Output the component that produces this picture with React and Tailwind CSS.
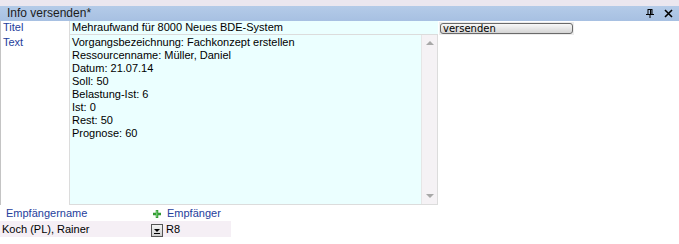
import React from 'react';

const lines = [
  'Vorgangsbezeichnung: Fachkonzept erstellen',
  'Ressourcenname: Müller, Daniel',
  'Datum: 21.07.14',
  'Soll: 50',
  'Belastung-Ist: 6',
  'Ist: 0',
  'Rest: 50',
  'Prognose: 60',
];

const PinIcon = () => (
  <svg width="8" height="9" viewBox="0 0 8 9">
    <rect x="2" y="0.5" width="4" height="5" fill="none" stroke="#000" strokeWidth="1" />
    <rect x="4" y="0.5" width="1.2" height="5" fill="#000" />
    <rect x="0" y="5" width="8" height="1" fill="#000" />
    <rect x="3.5" y="6" width="1" height="3" fill="#000" />
  </svg>
);

const CloseIcon = () => (
  <svg width="9" height="9" viewBox="0 0 9 9">
    <path d="M1 1 L8 8 M8 1 L1 8" stroke="#000" strokeWidth="1.6" />
  </svg>
);

const PlusIcon = () => (
  <svg width="8" height="8" viewBox="0 0 8 8">
    <path d="M3 0 H5 V3 H8 V5 H5 V8 H3 V5 H0 V3 H3 Z" fill="#3aa63a" stroke="#2b8a2b" strokeWidth="0.5" />
    <rect x="3.4" y="0.6" width="0.8" height="6.5" fill="#8fdc8f" />
  </svg>
);

const App = () => {
  return (
    <div className="w-[679px] h-[244px] bg-white overflow-hidden text-[11px] leading-[13px] text-black" style={{ fontFamily: '"Liberation Sans", Arial, sans-serif' }}>
      <div className="h-[6px] bg-[#ebe7ef]" />
      <div className="h-[15px] bg-gradient-to-b from-[#b4cbe8] to-[#a7c0e2] flex items-center justify-between pl-[7px] pr-[6px]">
        <span className="text-[12px] leading-[15px] text-[#1c1c1c]">Info versenden*</span>
        <div className="flex items-center gap-[10px]">
          <PinIcon />
          <CloseIcon />
        </div>
      </div>

      {/* Titel */}
      <div className="flex h-[14px]">
        <div className="w-[69px] border-l border-[#c4c4c4] pl-[2px] text-[#25409c] leading-[13px]">Titel</div>
        <div className="w-[369px] bg-[#ebffff] border-l border-b border-[#dcdcdc] pl-[2px] leading-[13px]">
          Mehraufwand für 8000 Neues BDE-System
        </div>
        <div className="ml-[1px] mt-[1px] h-[13px] bg-[#ececec] p-[1px]">
          <div className="w-[133px] h-[11px] rounded-[3px] border border-[#6a6a6a] bg-gradient-to-b from-[#f8f8f8] to-[#d4d4d4] pl-[2px] text-[10px] leading-[9px]" style={{ fontFamily: '"DejaVu Sans", Verdana, sans-serif' }}>
            versenden
          </div>
        </div>
      </div>

      {/* Text */}
      <div className="flex h-[170px]">
        <div className="w-[69px] border-l border-[#c4c4c4] pl-[2px] text-[#25409c] leading-[13px] pt-[1px]">Text</div>
        <div className="w-[369px] flex border-l border-b border-r border-[#dcdcdc]">
          <div className="flex-1 bg-[#ebffff] pl-[2px] pt-[1px]">
            {lines.map((l) => (
              <div key={l} className="h-[13px] leading-[13px]">{l}</div>
            ))}
          </div>
          <div className="w-[16px] bg-[#f5f2f5] border-l border-[#e6e6e6] flex flex-col items-center justify-between py-[6px]">
            <div className="w-0 h-0 border-l-[4px] border-r-[4px] border-b-[4px] border-l-transparent border-r-transparent border-b-[#a8a8a8]" />
            <div className="w-0 h-0 border-l-[4px] border-r-[4px] border-t-[4px] border-l-transparent border-r-transparent border-t-[#a8a8a8]" />
          </div>
        </div>
      </div>

      {/* Empfänger */}
      <div className="flex h-[13px] mt-[2px] text-[#25409c] leading-[13px]">
        <div className="w-[153px] pl-[6px]">Empfängername</div>
        <div className="flex items-center gap-[6px]">
          <PlusIcon />
          <span>Empfänger</span>
        </div>
      </div>
      <div className="flex items-center w-[231px] h-[16px] mt-[1px] bg-[#f5eff5]">
        <div className="w-[151px] pl-[2px] leading-[13px]">Koch (PL), Rainer</div>
        <div className="w-[12px] h-[13px] mt-[2px] border border-[#555] bg-gradient-to-b from-[#f4f4f4] to-[#cfcfcf] flex flex-col items-center justify-end pb-[2px]">
          <div className="w-0 h-0 border-l-[3px] border-r-[3px] border-t-[3px] border-l-transparent border-r-transparent border-t-black" />
          <div className="w-[6px] h-[1px] bg-black mt-[1px]" />
        </div>
        <div className="pl-[3px] leading-[13px]">R8</div>
      </div>
    </div>
  );
};

export default App;
